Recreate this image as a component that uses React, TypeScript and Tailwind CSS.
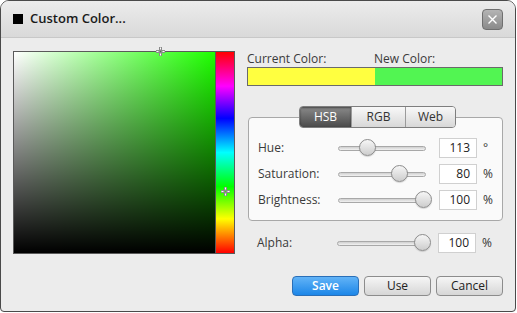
import React from 'react';

const font = { fontFamily: '"Open Sans", "Noto Sans", sans-serif' };

const Cross = ({ className }: { className: string }) => (
  <svg className={className} width="9" height="9" viewBox="0 0 9 9">
    <g stroke="#8a8a8a" strokeWidth="3" strokeLinecap="square">
      <path d="M4.5 0.5v2M4.5 6.5v2M0.5 4.5h2M6.5 4.5h2" />
    </g>
    <g stroke="#fff" strokeWidth="1">
      <path d="M4.5 0.5v2M4.5 6.5v2M0.5 4.5h2M6.5 4.5h2" />
    </g>
  </svg>
);

const Slider = ({ pos }: { pos: number }) => (
  <div className="relative h-[18px] w-[88px]">
    <div className="absolute top-[7px] left-0 h-[5px] w-full rounded-full border border-[#a8a8a8] bg-[linear-gradient(to_bottom,#cfcfcf,#f2f2f2)]" />
    <div
      className="absolute top-0 h-[17px] w-[17px] rounded-full border border-[#8c8c8c] bg-[linear-gradient(to_bottom,#f6f6f6,#cdcdcd)] shadow-[0_1px_1px_rgba(0,0,0,0.15)]"
      style={{ left: pos }}
    />
  </div>
);

const Row = ({ label, pos, value, unit }: { label: string; pos: number; value: string; unit: string }) => (
  <div className="flex h-[26px] items-center">
    <span className="w-[80px] text-[12px] text-[#3a3a3a]">{label}</span>
    <Slider pos={pos} />
    <div className="ml-[13px] flex h-[20px] w-[38px] items-center justify-end border border-[#d0d0d0] bg-white pr-[6px] text-[12px] text-[#222]">
      {value}
    </div>
    <span className="ml-[6px] text-[12px] text-[#333]">{unit}</span>
  </div>
);

export default function App() {
  return (
    <div className="h-[313px] w-[517px] bg-white" style={font}>
      <div className="flex h-[312px] w-[516px] flex-col overflow-hidden rounded-t-[9px] rounded-b-[4px] border border-[#4a4a4a] bg-[#ececec]">
        {/* title bar */}
        <div className="flex h-[37px] shrink-0 items-center border-b border-[#c8c8c8] bg-[linear-gradient(to_bottom,#ececec,#d9d9d9)] pr-[12px] pl-[12px]">
          <div className="h-[10px] w-[10px] bg-black" />
          <span className="ml-[7px] text-[13px] font-semibold text-[#1a1a1a]">Custom Color...</span>
          <button className="ml-auto flex h-[21px] w-[21px] items-center justify-center rounded-[4px] border border-[#6f6f6f] bg-[linear-gradient(to_bottom,#b4b4b4,#8a8a8a)]">
            <svg width="11" height="11" viewBox="0 0 11 11">
              <path d="M1.5 1.5l8 8M9.5 1.5l-8 8" stroke="#fff" strokeWidth="1.4" />
            </svg>
          </button>
        </div>

        {/* body */}
        <div className="flex flex-1 pt-[13px] pl-[12px]">
          {/* picker */}
          <div className="flex h-[203px] border border-[#5a5a5a]">
            <div className="relative h-full w-[201px] bg-[linear-gradient(to_top,#000,transparent),linear-gradient(to_right,#fff,#1eff00)]">
              <Cross className="absolute -top-[5px] left-[142px]" />
            </div>
            <div className="relative h-full w-[19px] border-l border-[#5a5a5a] bg-[linear-gradient(to_bottom,#f00,#f0f_17%,#00f_33%,#0ff_50%,#0f0_67%,#ff0_83%,#f00)]">
              <Cross className="absolute top-[135px] left-[5px]" />
            </div>
          </div>

          {/* right column */}
          <div className="ml-[12px] flex w-[256px] flex-col">
            <div className="flex h-[15px] items-center text-[12px] text-[#3a3a3a]">
              <span className="w-[127px]">Current Color:</span>
              <span>New Color:</span>
            </div>
            <div className="mt-[1px] flex h-[19px] border border-[#6a6a6a]">
              <div className="w-[127px] bg-[#ffff40]" />
              <div className="flex-1 bg-[#52f552]" />
            </div>

            {/* HSB panel */}
            <div className="relative mt-[31px] ml-[1px] h-[104px] rounded-[4px] border border-[#a8a8a8] bg-[#fafafa] pt-[17px] pl-[9px]">
              <div className="absolute -top-[12px] left-[50px] flex h-[22px] overflow-hidden rounded-[4px] border border-[#7e7e7e] text-[12px]">
                <div className="flex w-[51px] items-center justify-center bg-[linear-gradient(to_bottom,#8a8a8a,#4a4a4a)] text-white shadow-[inset_0_1px_2px_rgba(0,0,0,0.5)]">HSB</div>
                <div className="flex w-[54px] items-center justify-center border-l border-[#9a9a9a] bg-[linear-gradient(to_bottom,#f8f8f8,#d8d8d8)] text-[#333]">RGB</div>
                <div className="flex w-[50px] items-center justify-center border-l border-[#9a9a9a] bg-[linear-gradient(to_bottom,#f8f8f8,#d8d8d8)] text-[#333]">Web</div>
              </div>
              <Row label="Hue:" pos={21} value="113" unit="°" />
              <Row label="Saturation:" pos={53} value="80" unit="%" />
              <Row label="Brightness:" pos={77} value="100" unit="%" />
            </div>

            {/* alpha */}
            <div className="mt-[9px] ml-[10px]">
              <Row label="Alpha:" pos={77} value="100" unit="%" />
            </div>

            {/* buttons */}
            <div className="mt-[20px] flex justify-end gap-[5px] text-[12px]">
              <button className="h-[20px] w-[67px] rounded-[4px] border border-[#2a6fb8] bg-[linear-gradient(to_bottom,#62b3f7,#1c86e8)] font-semibold text-white">
                Save
              </button>
              <button className="h-[20px] w-[67px] rounded-[4px] border border-[#8c8c8c] bg-[linear-gradient(to_bottom,#f6f6f6,#d6d6d6)] text-[#222]">
                Use
              </button>
              <button className="h-[20px] w-[67px] rounded-[4px] border border-[#8c8c8c] bg-[linear-gradient(to_bottom,#f6f6f6,#d6d6d6)] text-[#222]">
                Cancel
              </button>
            </div>
          </div>
        </div>
      </div>
    </div>
  );
}
